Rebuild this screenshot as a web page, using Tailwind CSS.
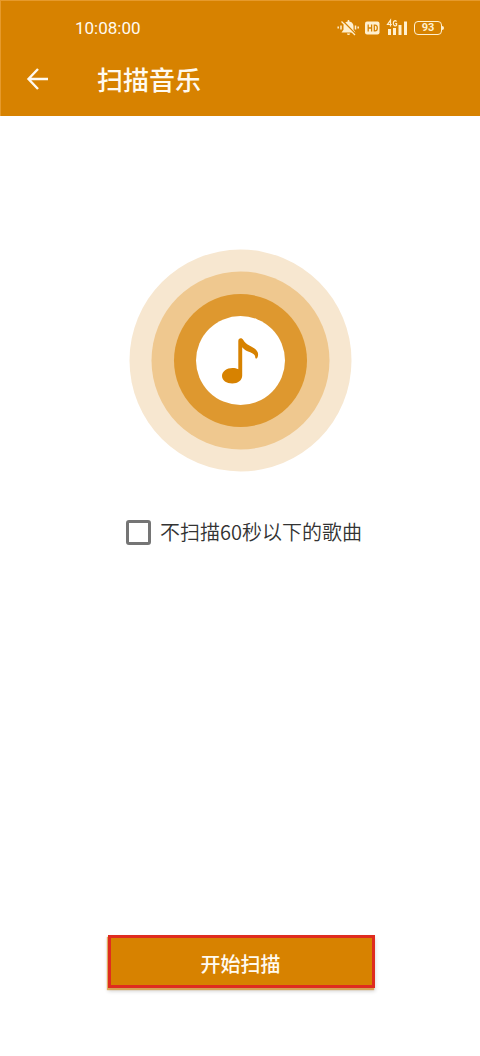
<!DOCTYPE html>
<html lang="zh-CN">
<head>
<meta charset="utf-8">
<meta name="viewport" content="width=device-width, initial-scale=1">
<title>扫描音乐</title>
<script src="https://cdn.jsdelivr.net/npm/@tailwindcss/browser@4"></script>
</head>
<body class="flex min-h-screen flex-col bg-white font-['Noto_Sans_CJK_SC',sans-serif] text-[#333333]">
  <header class="border-t border-l border-[#e69a2c] bg-[#d78200] text-[#fffaf0]">
    <div class="flex h-[52px] items-center justify-between pt-[2px] pr-9 pl-[74px]">
      <time class="font-['Roboto','Noto_Sans',sans-serif] text-[17px] leading-6">10:08:00</time>
      <div class="flex items-center text-[#fff0cf]">
        <svg class="h-5 w-6" viewBox="0 0 24 20" fill="none" stroke="currentColor" aria-label="静音">
          <path d="M11.500 3.500c-3.300 0-5 2.200-5 5v3.200L4.500 14.500h14l-2-2.800V8.500c0-2.800-1.700-5-5-5zM10 15.500h3a1.500 1.500 0 0 1-3 0z" fill="currentColor" stroke="none"/>
          <path d="M11.500 2v2" stroke-width="1.500"/>
          <path d="M5.500 2.500 19.500 17" stroke="#d78200" stroke-width="1.500"/>
          <path d="M4.500 3.500 18 17" stroke-width="1.300"/>
          <path d="M4 7.500v4M18.500 7.500v4M1.200 8.500v2M21.200 8.500v2" stroke-width="1.500"/>
        </svg>
        <svg class="ml-1 h-5 w-[15px]" viewBox="0 0 15 20" aria-label="HD">
          <rect y="3.500" width="14.500" height="13" rx="2" fill="currentColor"/>
          <path d="M3.200 6.500v7M6.600 6.500v7M3.200 10h3.400M9.300 7.100v5.800h.8c1.500 0 2.200-1.100 2.200-2.900s-.7-2.900-2.200-2.900z" fill="none" stroke="#d78200" stroke-width="1.300"/>
        </svg>
        <svg class="ml-[6px] h-5 w-[22px]" viewBox="0 0 22 20" aria-label="4G 信号">
          <path d="M4.500 8.500V2.200L1.500 6.500h4.300M10.500 3.600C9.500 2 7.300 2.600 7.300 5.200s2.300 3.400 3.300 1.900V5.600H9.200" fill="none" stroke="currentColor" stroke-width="1.200"/>
          <path d="M2 11h3v6H2zM7 10h3v7H7zM12.500 7h3v10h-3zM18 3.500h3V17h-3z" fill="currentColor"/>
        </svg>
        <div class="ml-[6px] flex items-center" aria-label="电量 93">
          <span class="flex h-[14px] w-7 items-center justify-center rounded border border-current font-['Roboto',sans-serif] text-[11px] leading-3 font-bold">93</span>
          <span class="h-1 w-[2px] rounded-r bg-current"></span>
        </div>
      </div>
    </div>
    <div class="flex h-[63px] items-start pl-6">
      <button type="button" class="mt-[14px]" aria-label="返回">
        <svg class="size-6" viewBox="0 0 24 24" fill="none" stroke="currentColor" stroke-width="2.400"><path d="M13 2 3.500 12 13 22M3.500 12H23"/></svg>
      </button>
      <h1 class="ml-12 pt-2 text-[26px] leading-9 font-medium">扫描音乐</h1>
    </div>
  </header>

  <main class="flex grow flex-col items-center">
    <svg class="mt-[133px] size-[223px]" viewBox="0 0 223 223" aria-hidden="true">
      <circle cx="111.500" cy="111.500" r="111" fill="#f7e7d0"/>
      <circle cx="111.500" cy="111.500" r="89" fill="#efc88f"/>
      <circle cx="111.500" cy="111.500" r="66.500" fill="#de982f"/>
      <circle cx="111.500" cy="111.500" r="44.500" fill="#ffffff"/>
      <path fill="#d78200" d="M109.300 92c0-3.200 3.600-3.700 5-1 3.300 6.200 12.200 6.600 14.400 12.300.8 2.300.3 4.300-.5 5.800-.7.900-1.900.6-1.900-.6 0-5.800-9.100-4.600-13.100-10.200V126.500c0 4.800-4.300 8-9.900 8-5.800 0-10.300-3-10.300-7.500s4.800-8 10.500-8c2.200 0 4.200.5 5.800 1.300z"/>
    </svg>
    <label class="mt-[42px] flex items-center gap-[9px] pl-2 text-[20px] leading-9 font-[350]">
      <input type="checkbox" class="size-[25px] appearance-none rounded-[3px] border-[3px] border-[#757575] bg-white checked:bg-[#d78200]">
      <span>不扫描60秒以下的歌曲</span>
    </label>
    <button type="button" class="mt-auto mb-[68px] ml-[3px] h-[53px] w-[267px] border-[3px] border-[#df2c1f] bg-[#d78200] pt-1 pr-[2px] text-[20px] leading-8 font-medium text-[#fffaf0] shadow-[-1px_2px_1px_#d7820099,0px_3px_4px_#00000033]">开始扫描</button>
  </main>
</body>
</html>
